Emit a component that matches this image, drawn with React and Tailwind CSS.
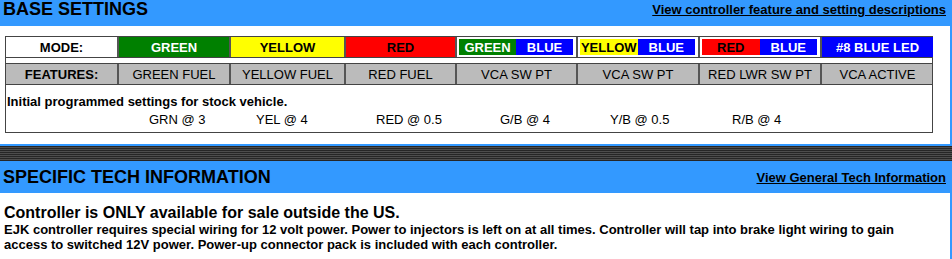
export default function App() {
  const modes = [
    { kind: "single", label: "GREEN", cls: "bg-[#008000] text-white" },
    { kind: "single", label: "YELLOW", cls: "bg-[#ffff00] text-black" },
    { kind: "single", label: "RED", cls: "bg-[#ff0000] text-black" },
    { kind: "pair", a: { label: "GREEN", cls: "bg-[#008000] text-white" } },
    { kind: "pair", a: { label: "YELLOW", cls: "bg-[#ffff00] text-black" } },
    { kind: "pair", a: { label: "RED", cls: "bg-[#ff0000] text-black" } },
    { kind: "single", label: "#8 BLUE LED", cls: "bg-[#0000ff] text-white" },
  ];
  const features = [
    "GREEN FUEL",
    "YELLOW FUEL",
    "RED FUEL",
    "VCA SW PT",
    "VCA SW PT",
    "RED LWR SW PT",
    "VCA ACTIVE",
  ];
  const settings = [
    { t: "GRN @ 3", w: "w-[107px]" },
    { t: "YEL @ 4", w: "w-[120px]" },
    { t: "RED @ 0.5", w: "w-[124px]" },
    { t: "G/B @ 4", w: "w-[110px]" },
    { t: "Y/B @ 0.5", w: "w-[122px]" },
    { t: "R/B @ 4", w: "w-[100px]" },
  ];
  const cols = "grid grid-cols-[111px_112px_115px_111px_121px_122px_122px_113px]";

  return (
    <div className="w-[952px] h-[259px] overflow-hidden bg-[#3399ff] font-['Liberation_Sans',Arial,sans-serif] text-black">
      {/* Base settings header */}
      <div className="h-[26px] flex items-start justify-between pl-[3px] pr-[6px]">
        <h2 className="text-[18px] leading-[18px] font-bold">BASE SETTINGS</h2>
        <a href="#" className="text-[13px] leading-[13px] font-bold underline pt-[3px]">
          View controller feature and setting descriptions
        </a>
      </div>

      {/* Base settings panel */}
      <div className="mr-[2px] h-[118px] bg-white pt-[10px] pl-[5px]">
        <div className="w-[928px] border border-[#444] text-[13px] leading-[13px]">
          {/* Mode row */}
          <div className={cols + " h-[21px] border-b border-[#444]"}>
            <div className="flex items-center justify-center font-bold bg-white">MODE:</div>
            {modes.map((m, i) =>
              m.kind === "single" ? (
                <div
                  key={i}
                  className={"flex items-center justify-center font-bold border-l-2 border-[#555] " + m.cls}
                >
                  {m.label}
                </div>
              ) : (
                <div key={i} className="flex border-l-2 border-[#555] bg-white p-[2px] pr-[3px]">
                  <div className={"flex-1 flex items-center justify-center font-bold " + m.a.cls}>{m.a.label}</div>
                  <div className="flex-1 flex items-center justify-center font-bold bg-[#0000ff] text-white">
                    BLUE
                  </div>
                </div>
              )
            )}
          </div>
          {/* Spacer row */}
          <div className="h-[6px] border-b border-[#444] bg-white"></div>
          {/* Features row */}
          <div className={cols + " h-[21px] border-b border-[#444] bg-[#bbbbbb]"}>
            <div className="flex items-center justify-center font-bold">FEATURES:</div>
            {features.map((f, i) => (
              <div key={i} className="flex items-center justify-center border-l-2 border-[#555]">
                {f}
              </div>
            ))}
          </div>
          {/* Stock settings */}
          <div className="h-[47px] pl-[1px] pt-[10px]">
            <div className="font-bold">Initial programmed settings for stock vehicle.</div>
            <div className="flex pl-[142px] pt-[5px]">
              {settings.map((s, i) => (
                <div key={i} className={s.w}>
                  {s.t}
                </div>
              ))}
            </div>
          </div>
        </div>
      </div>

      {/* Divider */}
      <div className="h-[2px]"></div>
      <div className="h-[15px] bg-[repeating-linear-gradient(to_bottom,#262626_0px,#262626_1px,#4d4d4d_1px,#4d4d4d_2px)]"></div>

      {/* Specific tech header */}
      <div className="h-[32px] flex items-center justify-between pl-[3px] pr-[6px]">
        <h2 className="text-[18px] leading-[18px] font-bold">SPECIFIC TECH INFORMATION</h2>
        <a href="#" className="text-[13px] leading-[13px] font-bold underline">
          View General Tech Information
        </a>
      </div>

      {/* Specific tech panel */}
      <div className="mr-[2px] h-[66px] bg-white pl-[4px] pt-[11px]">
        <p className="text-[16px] leading-[18px] font-bold">Controller is ONLY available for sale outside the US.</p>
        <p className="max-w-[905px] text-[13px] leading-[15px] font-bold">
          EJK controller requires special wiring for 12 volt power. Power to injectors is left on at all times.
          Controller will tap into brake light wiring to gain access to switched 12V power. Power-up connector pack is
          included with each controller.
        </p>
      </div>
    </div>
  );
}
